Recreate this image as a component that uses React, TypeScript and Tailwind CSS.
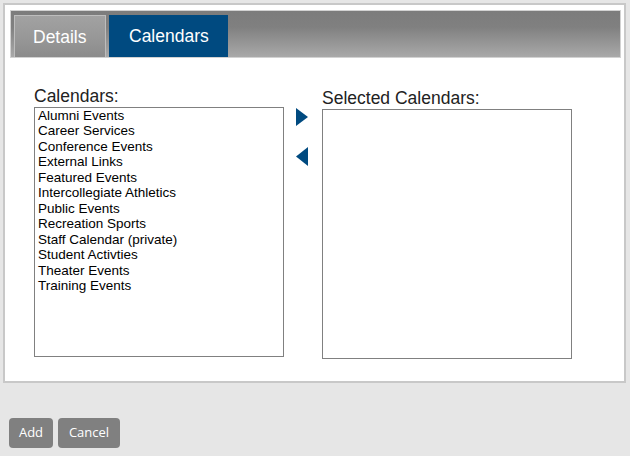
import React from "react";

const items = [
  "Alumni Events",
  "Career Services",
  "Conference Events",
  "External Links",
  "Featured Events",
  "Intercollegiate Athletics",
  "Public Events",
  "Recreation Sports",
  "Staff Calendar (private)",
  "Student Activties",
  "Theater Events",
  "Training Events",
];

export default function App() {
  return (
    <div className="w-[630px] h-[456px] bg-[#e6e6e6] pt-[3px] pl-[3px] pr-[4px] font-['Liberation_Sans',Arial,sans-serif]">
      <div className="h-[380px] bg-white border-2 border-[#c8c8c8] pt-[5px] pl-[5px] pr-[3px]">
        <div className="h-[48px] border border-[#d2d2d2] bg-[linear-gradient(to_bottom,#7c7c7c_0%,#808080_35%,#a9a9a9_100%)] flex items-end gap-[3px] pl-[3px]">
          <div className="w-[92px] h-[42px] border border-b-0 border-[#bdbdbd] bg-[linear-gradient(to_bottom,#a2a2a2_0%,#979797_55%,#8b8b8b_100%)] text-white text-[17.5px] flex items-center pl-[18px] pt-[1px]">
            Details
          </div>
          <div className="w-[119px] h-[42px] bg-[#004a80] text-white text-[17.5px] flex items-center pl-[20px] pt-[1px]">
            Calendars
          </div>
        </div>
        <div className="flex pl-[24px] pt-[28px]">
          <div className="flex flex-col">
            <div className="text-[17.5px] leading-[21px] text-[#222] h-[21px]">Calendars:</div>
            <div className="w-[250px] h-[250px] border border-[#808080] px-[3px] text-[13.5px] leading-[15.45px] text-black">
              {items.map((it) => (
                <div key={it}>{it}</div>
              ))}
            </div>
          </div>
          <div className="flex flex-col pl-[12px] pt-[22px] gap-[21px] w-[38px]">
            <svg width="12" height="18" viewBox="0 0 12 18">
              <polygon points="0,0 12,9 0,18" fill="#004a80" />
            </svg>
            <svg width="12" height="19" viewBox="0 0 12 19">
              <polygon points="12,0 0,9.5 12,19" fill="#004a80" />
            </svg>
          </div>
          <div className="flex flex-col pt-[2px]">
            <div className="text-[17.5px] leading-[21px] text-[#222] h-[21px]">Selected Calendars:</div>
            <div className="w-[250px] h-[250px] border border-[#808080]"></div>
          </div>
        </div>
      </div>
      <div className="flex gap-[5px] mt-[35px] pl-[6px] font-['Open_Sans',sans-serif] text-[13px] text-white">
        <button className="w-[44px] h-[30px] rounded-[4px] bg-[#808080] flex items-center justify-center">Add</button>
        <button className="w-[62px] h-[30px] rounded-[4px] bg-[#808080] flex items-center justify-center">Cancel</button>
      </div>
    </div>
  );
}
